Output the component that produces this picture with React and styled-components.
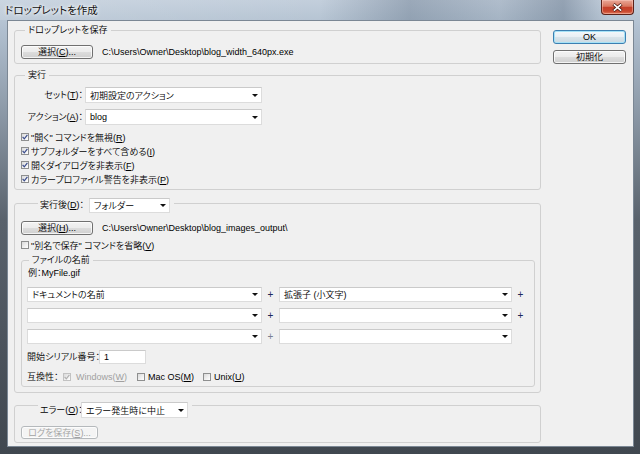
import styled, { createGlobalStyle } from "styled-components";

const GlobalStyle = createGlobalStyle`
  html, body { margin: 0; padding: 0; }
  body {
    font-family: "Liberation Sans", "Noto Sans CJK JP", sans-serif;
    font-size: 9px;
    font-weight: 350;
    color: #000;
    font-feature-settings: "palt";
  }
  * { box-sizing: border-box; }
`;

const Window = styled.div`
  width: 640px;
  height: 454px;
  display: flex;
  flex-direction: column;
  overflow: hidden;
  background: linear-gradient(180deg, #c3cfdc 0px, #b0bfcf 30px, #8d9aa8 110px, #59626c 220px, #40474f 454px);
`;

const TitleBar = styled.div`
  height: 20px;
  flex: none;
  display: flex;
  align-items: flex-start;
  justify-content: space-between;
  padding: 0 6px 0 5px;
  background: linear-gradient(90deg, rgba(255,255,255,0.14) 0%, rgba(255,255,255,0) 50%, rgba(40,60,85,0.26) 64%, rgba(40,60,85,0.12) 78%, rgba(40,60,85,0.3) 88%, rgba(255,255,255,0) 95%);
`;

const Title = styled.div`
  font-family: "Noto Sans CJK JP", sans-serif;
  font-size: 10.5px;
  font-weight: 400;
  line-height: 20px;
  color: #111;
  text-shadow: 0 0 5px #fff, 0 0 3px #fff;
`;

const CloseButton = styled.div`
  width: 33px;
  height: 15px;
  display: flex;
  align-items: center;
  justify-content: center;
  border: 1px solid #5b2219;
  border-top: none;
  border-radius: 0 0 4px 4px;
  background: linear-gradient(180deg, #e9a898 0%, #d9775f 45%, #c5412a 52%, #c8462e 80%, #e07a5c 100%);
  box-shadow: inset 0 0 0 1px rgba(255, 210, 200, 0.45);
`;

const Frame = styled.div`
  flex: 1;
  display: flex;
  padding: 0 6px 7px 7px;
`;

const Client = styled.div`
  flex: 1;
  display: flex;
  align-items: flex-start;
  gap: 12px;
  padding: 2px 7px 0 6px;
  background: #f0f0f0;
  border: 1px solid #7b8794;
`;

const MainColumn = styled.div`
  width: 527px;
  flex: none;
  display: flex;
  flex-direction: column;
`;

const SideColumn = styled.div`
  width: 73px;
  flex: none;
  display: flex;
  flex-direction: column;
  gap: 6px;
  padding-top: 7px;
`;

const Group = styled.fieldset`
  margin: ${(p) => p.$mt || 0}px 0 0;
  padding: ${(p) => p.$pad};
  border: 1px solid #d0d0d0;
  border-radius: 3px;
  min-width: 0;
  display: flex;
  flex-direction: column;
  align-items: stretch;
`;

const Legend = styled.legend`
  margin-left: ${(p) => p.$ml ?? 4}px;
  padding: 0 3px;
  height: 14px;
  line-height: 14px;
  white-space: nowrap;
`;

const ControlLegend = styled.legend`
  margin-left: 17px;
  padding: 0 4px 0 2px;
  height: ${(p) => p.$h}px;
  display: flex;
  align-items: flex-start;
  white-space: nowrap;
`;

const Row = styled.div`
  display: flex;
  align-items: center;
  height: ${(p) => p.$h ?? 14}px;
  margin-top: ${(p) => p.$mt ?? 0}px;
  white-space: nowrap;
`;

const Label = styled.span`
  width: ${(p) => (p.$w ? `${p.$w}px` : "auto")};
  height: ${(p) => p.$h ?? 15}px;
  line-height: ${(p) => p.$h ?? 15}px;
  margin-right: ${(p) => p.$mr ?? 0}px;
  text-align: ${(p) => p.$align ?? "left"};
  flex: none;
`;

const SelectBox = styled.div`
  width: ${(p) => p.$w}px;
  height: ${(p) => p.$h ?? 15}px;
  flex: none;
  display: flex;
  align-items: center;
  justify-content: space-between;
  padding: 0 3px 0 4px;
  background: #fff;
  border: 1px solid #dcdcdc;
  border-top-color: #cacaca;
  white-space: nowrap;
`;

const Arrow = styled.span`
  width: 0;
  height: 0;
  border-left: 3px solid transparent;
  border-right: 3px solid transparent;
  border-top: 3px solid #111;
`;

const TextField = styled.div`
  width: ${(p) => p.$w}px;
  height: 14px;
  line-height: 12px;
  padding-left: 4px;
  background: #fff;
  border: 1px solid #dcdcdc;
  border-top-color: #cacaca;
`;

const Button = styled.button`
  width: ${(p) => p.$w}px;
  height: ${(p) => p.$h ?? 14}px;
  flex: none;
  padding: 0;
  font-family: "Liberation Sans", "Noto Sans CJK JP", sans-serif;
  font-feature-settings: "palt";
  font-size: 9px;
  font-weight: 350;
  line-height: 12px;
  color: ${(p) => (p.disabled ? "#a2a2a2" : "#000")};
  border: 1px solid ${(p) => (p.disabled ? "#b5b9bc" : p.$primary ? "#3c7fb1" : "#707070")};
  border-radius: 3px;
  background: ${(p) =>
    p.disabled
      ? "#f4f4f4"
      : p.$primary
      ? "linear-gradient(180deg, #f3f8fb 0%, #e8eff4 50%, #d9e4eb 50%, #cbd9e2 100%)"
      : "linear-gradient(180deg, #f3f3f3 0%, #ebebeb 50%, #dddddd 50%, #cfcfcf 100%)"};
  box-shadow: inset 0 0 0 1px ${(p) => (p.$primary ? "#a6e2f7" : "rgba(255,255,255,0.75)")};
`;

const PathText = styled.span`
  margin-left: 9px;
  line-height: 14px;
`;

const CheckRow = styled.div`
  display: flex;
  align-items: center;
  gap: ${(p) => p.$gap ?? 2}px;
  height: 14px;
  flex: none;
  width: ${(p) => (p.$w ? `${p.$w}px` : "auto")};
  margin-top: ${(p) => p.$mt ?? 0}px;
  white-space: nowrap;
  color: ${(p) => (p.$disabled ? "#a0a0a0" : "#000")};
`;

const Box = styled.span`
  width: 8px;
  height: 8px;
  flex: none;
  display: flex;
  align-items: center;
  justify-content: center;
  border: 1px solid ${(p) => (p.$disabled ? "#c2c2c2" : "#8e8f8f")};
  background: linear-gradient(135deg, #dadada 0%, #f3f3f3 65%, #ffffff 100%);
`;

const CheckList = styled.div`
  display: flex;
  flex-direction: column;
  margin-top: ${(p) => p.$mt ?? 0}px;
`;

const Plus = styled.span`
  width: 17px;
  text-align: center;
  flex: none;
  font-size: 10px;
  color: ${(p) => p.$c ?? "#1d2a5a"};
`;

const Example = styled.div`
  height: 13px;
  line-height: 13px;
  padding-left: 1px;
`;

function CheckBox({ checked, disabled }) {
  return (
    <Box $disabled={disabled}>
      {checked && (
        <svg width="6" height="6" viewBox="0 0 6 6">
          <path
            d="M0.6 2.9 L2.3 4.9 L5.4 0.8"
            fill="none"
            stroke={disabled ? "#b0b0b0" : "#3b4d8c"}
            strokeWidth="1.2"
          />
        </svg>
      )}
    </Box>
  );
}

function Select({ w, h, children }) {
  return (
    <SelectBox $w={w} $h={h}>
      <span>{children}</span>
      <Arrow />
    </SelectBox>
  );
}

function Check({ checked, disabled, children, mt, w, gap }) {
  return (
    <CheckRow $mt={mt} $w={w} $gap={gap} $disabled={disabled}>
      <CheckBox checked={checked} disabled={disabled} />
      <span>{children}</span>
    </CheckRow>
  );
}

export default function App() {
  return (
    <>
      <GlobalStyle />
      <Window>
        <TitleBar>
          <Title>ドロップレットを作成</Title>
          <CloseButton>
            <svg width="11" height="9" viewBox="0 0 11 9">
              <path d="M1.5 1.2 L9.5 7.8 M9.5 1.2 L1.5 7.8" stroke="#4a1a12" strokeWidth="3.2" />
              <path d="M1.8 1.4 L9.2 7.6 M9.2 1.4 L1.8 7.6" stroke="#fff" strokeWidth="1.7" />
            </svg>
          </CloseButton>
        </TitleBar>
        <Frame>
          <Client>
            <MainColumn>
              <Group $pad="8px 5px 4px 6px">
                <Legend>ドロップレットを保存</Legend>
                <Row>
                  <Button $w={72}>
                    選択(<u>C</u>)...
                  </Button>
                  <PathText>C:\Users\Owner\Desktop\blog_width_640px.exe</PathText>
                </Row>
              </Group>

              <Group $mt={4} $pad="5px 5px 3px 6px">
                <Legend>実行</Legend>
                <Row $h={16}>
                  <Label $w={62} $mr={2} $h={16} $align="right">
                    セット(<u>T</u>)：
                  </Label>
                  <Select w={177} h={16}>初期設定のアクション</Select>
                </Row>
                <Row $h={16} $mt={6}>
                  <Label $w={62} $mr={2} $h={16} $align="right">
                    アクション(<u>A</u>)：
                  </Label>
                  <Select w={177} h={16}>blog</Select>
                </Row>
                <CheckList $mt={5}>
                  <Check checked>
                    "開く" コマンドを無視(<u>R</u>)
                  </Check>
                  <Check checked>
                    サブフォルダーをすべて含める(<u>I</u>)
                  </Check>
                  <Check checked>
                    開くダイアログを非表示(<u>F</u>)
                  </Check>
                  <Check checked>
                    カラープロファイル警告を非表示(<u>P</u>)
                  </Check>
                </CheckList>
              </Group>

              <Group $mt={8} $pad="13px 5px 5px 6px">
                <ControlLegend $h={10}>
                  <Label $w={49} $h={15}>
                    実行後(<u>D</u>)：
                  </Label>
                  <Select w={81} h={15}>フォルダー</Select>
                </ControlLegend>
                <Row>
                  <Button $w={72}>
                    選択(<u>H</u>)...
                  </Button>
                  <PathText>C:\Users\Owner\Desktop\blog_images_output\</PathText>
                </Row>
                <Check mt={3}>
                  "別名で保存" コマンドを省略(<u>V</u>)
                </Check>

                <Group $mt={1} $pad="0 4px 2px 5px">
                  <Legend $ml={2}>ファイルの名前</Legend>
                  <Example>例：MyFile.gif</Example>
                  <Row $h={15} $mt={7}>
                    <Select w={235}>ドキュメントの名前</Select>
                    <Plus>+</Plus>
                    <Select w={233}>拡張子 (小文字)</Select>
                    <Plus>+</Plus>
                  </Row>
                  <Row $h={15} $mt={6}>
                    <Select w={235} />
                    <Plus>+</Plus>
                    <Select w={233} />
                    <Plus>+</Plus>
                  </Row>
                  <Row $h={15} $mt={6}>
                    <Select w={235} />
                    <Plus $c="#7a7f90">+</Plus>
                    <Select w={233} />
                  </Row>
                  <Row $mt={6}>
                    <Label $w={72} $h={14}>
                      開始シリアル番号：
                    </Label>
                    <TextField $w={47}>1</TextField>
                  </Row>
                  <Row $mt={6}>
                    <Label $w={36} $h={14}>
                      互換性：
                    </Label>
                    <Check checked disabled w={74} gap={5}>
                      Windows(<u>W</u>)
                    </Check>
                    <Check w={66} gap={3}>
                      Mac OS(<u>M</u>)
                    </Check>
                    <Check gap={3}>
                      Unix(<u>U</u>)
                    </Check>
                  </Row>
                </Group>
              </Group>

              <Group $mt={9} $pad="17px 5px 3px 6px">
                <ControlLegend $h={6}>
                  <Label $w={41} $h={16}>
                    エラー(<u>O</u>)：
                  </Label>
                  <Select w={107} h={16}>エラー発生時に中止</Select>
                </ControlLegend>
                <Row>
                  <Button $w={77} $h={13} disabled>
                    ログを保存(<u>S</u>)...
                  </Button>
                </Row>
              </Group>
            </MainColumn>

            <SideColumn>
              <Button $w={73} $primary>
                OK
              </Button>
              <Button $w={73}>初期化</Button>
            </SideColumn>
          </Client>
        </Frame>
      </Window>
    </>
  );
}
